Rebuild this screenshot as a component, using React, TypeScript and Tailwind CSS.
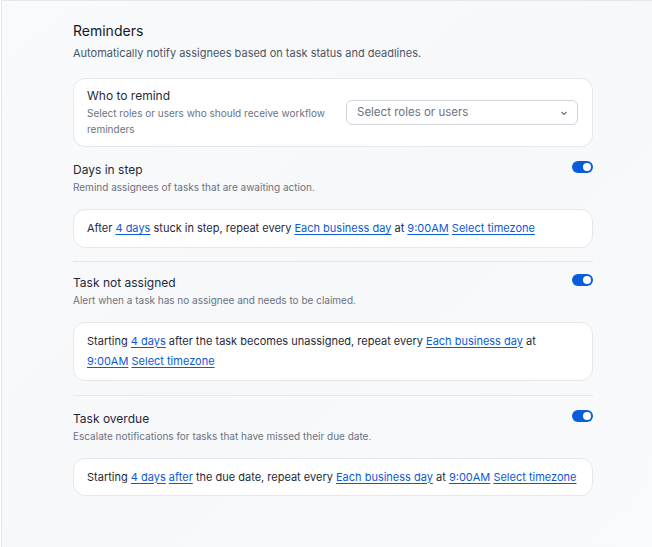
import React from "react";

const L = ({ children }: { children: React.ReactNode }) => (
  <a className="text-[#0b5ad6] underline underline-offset-2 decoration-[1px] cursor-pointer">{children}</a>
);

const Toggle = () => (
  <div className="w-[21px] h-[12px] rounded-full bg-[#0b5cdb] flex items-center justify-end pr-[2px] shrink-0">
    <div className="w-[8px] h-[8px] rounded-full bg-white" />
  </div>
);

const Section = ({
  title,
  desc,
  children,
}: {
  title: string;
  desc: string;
  children: React.ReactNode;
}) => (
  <div>
    <div className="flex items-start justify-between">
      <div>
        <div className="text-[12px] leading-[18px] text-[#1f2937]">{title}</div>
        <div className="text-[10px] leading-[16px] text-[#6b7280]">{desc}</div>
      </div>
      <Toggle />
    </div>
    <div className="mt-[14px] bg-white border border-[#e5e7eb] rounded-xl px-[13px] py-[8px] text-[11px] leading-[20.5px] text-[#1f2937]">
      {children}
    </div>
  </div>
);

export default function App() {
  return (
    <div
      className="min-h-[547px] w-[652px] bg-white pl-px"
      style={{ fontFamily: "Inter, 'Noto Sans', sans-serif" }}
    >
      <div className="min-h-[547px] border-t border-l border-[#e5e7eb] bg-gradient-to-br from-[#f9fafb] via-[#f7f8fa] to-[#f9fafb]">
        <div className="w-[520px] ml-[71px] pt-[18px]">
          <div className="text-[14px] leading-6 text-[#111827]">Reminders</div>
          <div className="text-[11px] leading-[18px] mt-px text-[#4b5563]">
            Automatically notify assignees based on task status and deadlines.
          </div>

          <div className="mt-[16px] bg-white border border-[#e5e7eb] rounded-xl pl-[13px] pr-[14px] pt-[8px] pb-[9px] flex items-center gap-4">
            <div className="flex-1">
              <div className="text-[12px] leading-[18px] text-[#1f2937]">Who to remind</div>
              <div className="text-[10px] leading-[16px] text-[#6b7280]">
                Select roles or users who should receive workflow reminders
              </div>
            </div>
            <div className="w-[232px] h-[25px] mt-px border border-[#d1d5db] rounded-md flex items-center justify-between pl-[10px] pr-[9px] text-[11.5px] text-[#6b7280]">
              <span className="pt-px">Select roles or users</span>
              <svg width="8" height="8" viewBox="0 0 8 8" fill="none" stroke="#6b7280" strokeWidth="1.1">
                <path d="M1.5 3 L4 5.5 L6.5 3" />
              </svg>
            </div>
          </div>

          <div className="mt-[14px]">
            <Section title="Days in step" desc="Remind assignees of tasks that are awaiting action.">
              After <L>4 days</L> stuck in step, repeat every <L>Each business day</L> at <L>9:00AM</L>{" "}
              <L>Select timezone</L>
            </Section>
          </div>

          <div className="mt-[13px] border-t border-[#e5e7eb] pt-[12px]">
            <Section title="Task not assigned" desc="Alert when a task has no assignee and needs to be claimed.">
              Starting <L>4 days</L> after the task becomes unassigned, repeat every <L>Each business day</L> at{" "}
              <L>9:00AM</L> <L>Select timezone</L>
            </Section>
          </div>

          <div className="mt-[14px] border-t border-[#e5e7eb] pt-[14px]">
            <Section title="Task overdue" desc="Escalate notifications for tasks that have missed their due date.">
              Starting <L>4 days</L> <L>after</L> the due date, repeat every <L>Each business day</L> at{" "}
              <L>9:00AM</L> <L>Select timezone</L>
            </Section>
          </div>
        </div>
      </div>
    </div>
  );
}
